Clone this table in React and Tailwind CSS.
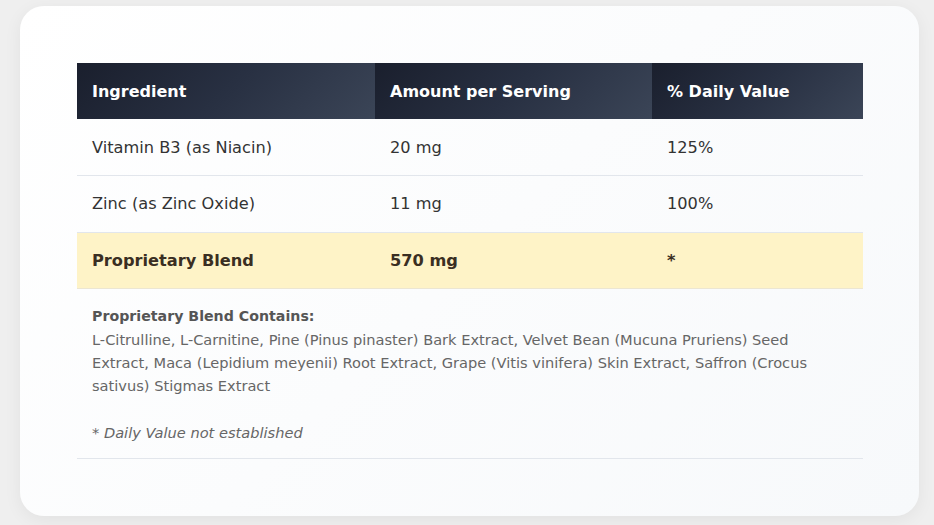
export default function App() {
  const rows = [
    { name: "Vitamin B3 (as Niacin)", amount: "20 mg", dv: "125%", h: "h-[56px]" },
    { name: "Zinc (as Zinc Oxide)", amount: "11 mg", dv: "100%", h: "h-[57px]" },
  ];

  const th =
    "h-[56px] px-[15px] pt-[2px] text-left font-bold text-[16px] text-white bg-linear-135 from-[#1a1f2d] via-[#283042] to-[#3b4557]";

  return (
    <div
      className="w-[934px] h-[525px] bg-[#efefef] pt-[6px] pl-[20px]"
      style={{ fontFamily: '"DejaVu Sans", Verdana, sans-serif' }}
    >
      <div className="w-[899px] h-[510px] rounded-[24px] bg-linear-135 from-white to-[#f7f9fb] shadow-[0_4px_18px_rgba(0,0,0,0.06)] pt-[57px] pl-[57px]">
        <table className="w-[786px] border-collapse">
          <thead>
            <tr>
              <th className={th + " w-[298px]"}>Ingredient</th>
              <th className={th + " w-[277px]"}>Amount per Serving</th>
              <th className={th}>% Daily Value</th>
            </tr>
          </thead>
          <tbody>
            {rows.map((r) => (
              <tr key={r.name} className="border-b border-[#e2e6ec] text-[#333] text-[16.2px]">
                <td className={r.h + " px-[15px] pt-[2px]"}>{r.name}</td>
                <td className="px-[15px] pt-[2px]">{r.amount}</td>
                <td className="px-[15px] pt-[2px]">{r.dv}</td>
              </tr>
            ))}
            <tr className="border-b border-[#ece6d2] bg-[#fef3c7] text-[#3a2e22] text-[16.2px] font-bold">
              <td className="h-[56px] px-[15px] pt-[2px]">Proprietary Blend</td>
              <td className="px-[15px] pt-[2px]">570 mg</td>
              <td className="px-[15px] pt-[2px]">*</td>
            </tr>
            <tr className="border-b border-[#e2e6ec]">
              <td colSpan={3} className="pl-[15px] pr-[50px] pt-[16px] pb-[14px] text-[14.6px] leading-[23px] text-[#666]">
                <div className="font-bold text-[14.2px] text-[#555]">Proprietary Blend Contains:</div>
                <div>
                  L-Citrulline, L-Carnitine, Pine (Pinus pinaster) Bark Extract, Velvet Bean (Mucuna
                  Pruriens) Seed Extract, Maca (Lepidium meyenii) Root Extract, Grape (Vitis vinifera)
                  Skin Extract, Saffron (Crocus sativus) Stigmas Extract
                </div>
                <div className="mt-[24px] italic">* Daily Value not established</div>
              </td>
            </tr>
          </tbody>
        </table>
      </div>
    </div>
  );
}
